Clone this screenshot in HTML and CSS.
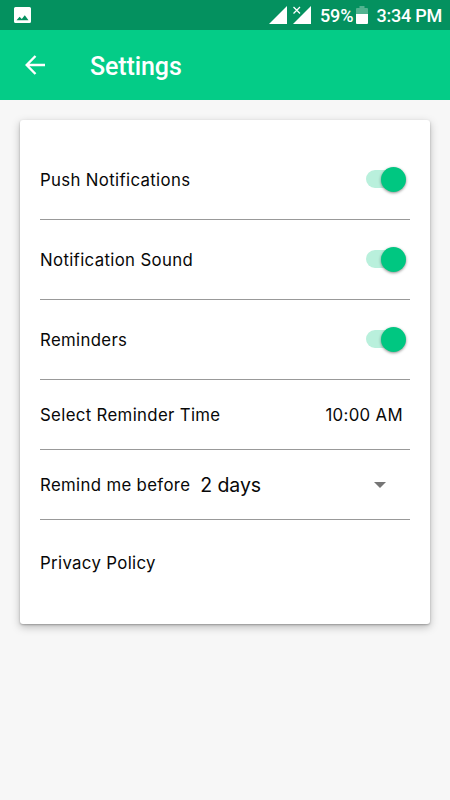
FILE: index.html
```html
<!DOCTYPE html>
<html lang="en">
<head>
<meta charset="utf-8">
<title>Settings</title>
<link rel="stylesheet" href="styles.css">
</head>
<body>
<div class="status">
  <svg class="photo" width="18" height="18" viewBox="0 0 18 18"><path fill="#fff" fill-rule="evenodd" d="M1.500 1h14a1.500 1.500 0 0 1 1.500 1.500v13a1.500 1.500 0 0 1-1.500 1.500h-14A1.500 1.500 0 0 1 0 15.500v-13A1.500 1.500 0 0 1 1.500 1zM2.500 14.300h12l-3.700-5-3 3.600-2.200-2.200z"/></svg>
  <svg class="signals" width="44" height="20" viewBox="0 0 44 20"><path fill="#fff" d="M0 19L18 1v18zM24 19L42 1v18z"/><path stroke="#04915f" stroke-width="4" d="M25 2l7 7M31 2l-6 6"/><path stroke="#fff" stroke-width="1.300" d="M24.500 2l6.500 6.500M31 2l-6.500 6.500"/></svg>
  <span class="percent">59%</span>
  <svg class="battery" width="12" height="18" viewBox="0 0 12 18"><path fill="#52b390" d="M3.500 0h5v2H11q1 0 1 1v5H0V3q0-1 1-1h2.500z"/><path fill="#fff" d="M0 8h12v9q0 1-1 1H1q-1 0-1-1z"/></svg>
  <span class="clock">3:34 PM</span>
</div>
<header class="bar">
  <svg width="20" height="20" viewBox="0 0 20 20"><path fill="none" stroke="#fff" stroke-width="2.400" d="M20 10H2M10.500 1L1.700 10l8.800 9"/></svg>
  <h1>Settings</h1>
</header>
<main class="card">
  <div class="row"><span>Push Notifications</span><span class="switch"></span></div>
  <div class="row"><span>Notification Sound</span><span class="switch"></span></div>
  <div class="row"><span>Reminders</span><span class="switch"></span></div>
  <div class="row short"><span>Select Reminder Time</span><span class="time">10:00 AM</span></div>
  <div class="row short"><span>Remind me before</span><span class="days">2 days</span><span class="caret"></span></div>
  <div class="row last"><span>Privacy Policy</span></div>
</main>
</body>
</html>
```
FILE: styles.css
```css
* { box-sizing: border-box; }
body { margin: 0; height: 800px; background: #f7f7f7; font-family: Roboto, "Liberation Sans", sans-serif; color: #080808; overflow: hidden; }
.status { height: 30px; background: #04915f; display: flex; align-items: center; padding: 0 8px 0 14px; color: #fff; font-size: 18px; font-weight: 500; }
.signals { margin-left: auto; }
.percent { margin-left: 7px; }
.battery { margin: 0 9px 0 2px; }
.clock { letter-spacing: -.25px; }
.bar { height: 70px; background: #04cc87; color: #fff; display: flex; align-items: center; padding-left: 25px; }
.bar h1 { margin: 2px 0 0 45px; font-size: 25px; font-weight: 500; letter-spacing: -.1px; }
.card { margin: 20px; height: 504px; padding: 20px; background: #fff; border-radius: 3px; box-shadow: 0 1px 2px rgba(0,0,0,.25), 0 3px 9px rgba(0,0,0,.25); }
.row { height: 80px; display: flex; align-items: center; justify-content: space-between; border-bottom: 1px solid #999; font-family: Inter, Roboto, sans-serif; font-size: 16.8px; line-height: 22px; letter-spacing: .34px; }
.short { height: 70px; }
.last { height: 86px; border: 0; }
.switch { position: relative; width: 36px; height: 18px; margin: 0 8px 1px 0; border-radius: 9px; background: #b9f0dc; }
.switch::after { content: ""; position: absolute; right: -4px; top: -3px; width: 25px; height: 25px; border-radius: 50%; background: #00c781; box-shadow: 0 1px 3px rgba(0,0,0,.45); }
.time { margin-right: 7px; }
.days { margin: 0 auto 0 10px; font-size: 19.5px; letter-spacing: -.1px; }
.caret { margin-right: 24px; border: 6px solid transparent; border-top-color: #757575; border-bottom: 0; }
```
